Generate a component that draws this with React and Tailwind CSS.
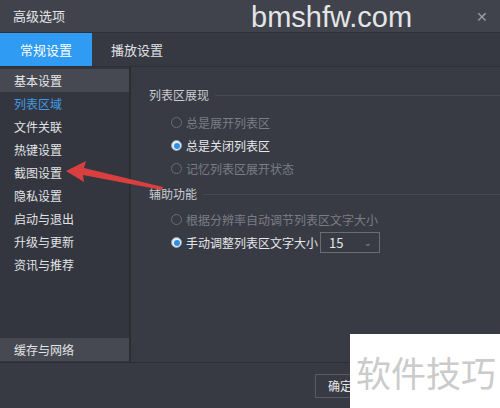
import React from "react";

const sideItems = [
  "基本设置",
  "列表区域",
  "文件关联",
  "热键设置",
  "截图设置",
  "隐私设置",
  "启动与退出",
  "升级与更新",
  "资讯与推荐",
];

function Radio({ checked, label, dim }) {
  return (
    <div className="flex items-center h-[23px] gap-[4px]">
      <span
        className={
          "w-[11px] h-[11px] rounded-full border flex items-center justify-center " +
          (checked ? "border-[#8aa0b8] bg-[#e8eef5]" : "border-[#6a6d74]")
        }
      >
        {checked && <span className="w-[6px] h-[6px] rounded-full bg-[#2d8fe6]" />}
      </span>
      <span className={dim ? "text-[#7a7d84]" : "text-[#e6e7ea]"}>{label}</span>
    </div>
  );
}

function Section({ title }) {
  return (
    <div className="flex items-center gap-[6px] h-[20px]">
      <span className="text-[#c9cbd0]">{title}</span>
      <div className="flex-1 h-px bg-[#474a52]" />
    </div>
  );
}

export default function App() {
  return (
    <div
      className="relative w-[500px] h-[408px] overflow-hidden bg-[#383b44] text-[12px] flex flex-col"
      style={{ fontFamily: '"Noto Sans CJK SC", "Noto Sans", sans-serif' }}
    >
      {/* title bar */}
      <div className="h-[33px] flex items-center justify-between pl-[13px] pr-[12px] bg-[#40434b] border-b border-[#2f3138]">
        <span className="text-[13px] text-[#e4e5e8]">高级选项</span>
        <span className="text-[#9a9ca2] text-[14px] leading-none font-light">✕</span>
      </div>

      {/* tabs */}
      <div className="h-[34px] flex bg-[#363942] border-b border-[#2d3036]">
        <div className="w-[92px] bg-[#2f9bf2] flex items-center justify-center text-[13px] text-white">
          常规设置
        </div>
        <div className="w-[90px] flex items-center justify-center text-[13px] text-[#e0e1e4]">
          播放设置
        </div>
      </div>

      {/* body */}
      <div className="h-[295px] flex">
        <div className="w-[131px] bg-[#33363e] border-r-2 border-[#2b2e34] flex flex-col justify-between pt-[2px] pb-[1px]">
          <div className="flex flex-col">
            {sideItems.map((s, i) => (
              <div
                key={s}
                className={
                  "h-[23px] flex items-center pl-[14px] " +
                  (i === 0 ? "bg-[#464951] text-[#e6e7ea]" : i === 1 ? "text-[#3f9be6]" : "text-[#e2e3e6]")
                }
              >
                {s}
              </div>
            ))}
          </div>
          <div className="h-[23px] flex items-center pl-[14px] bg-[#464951] text-[#e2e3e6]">
            缓存与网络
          </div>
        </div>

        <div className="flex-1 pl-[18px] pt-[18px] flex flex-col">
          <Section title="列表区展现" />
          <div className="pl-[22px] pt-[6px] flex flex-col">
            <Radio label="总是展开列表区" dim />
            <Radio label="总是关闭列表区" checked />
            <Radio label="记忆列表区展开状态" dim />
          </div>
          <div className="pt-[4px]">
            <Section title="辅助功能" />
          </div>
          <div className="pl-[22px] pt-[4px] flex flex-col">
            <Radio label="根据分辨率自动调节列表区文字大小" dim />
            <div className="flex items-center gap-[2px]">
              <Radio label="手动调整列表区文字大小" checked />
              <div className="w-[60px] h-[21px] border border-[#6a6d74] flex items-center justify-between pl-[8px] pr-[7px] text-[13px] text-[#e6e7ea]">
                <span>15</span>
                <span className="text-[#8d9096] text-[9px]">⌄</span>
              </div>
            </div>
          </div>
        </div>
      </div>

      {/* footer */}
      <div className="flex-1 border-t border-[#2b2e34] bg-[#373a43] flex items-center pl-[315px]">
        <div className="w-[50px] h-[24px] border border-[#585b62] flex items-center justify-center text-[#e6e7ea]">
          确定
        </div>
      </div>

      {/* watermark */}
      <div
        className="absolute left-[251px] top-[0px] text-[29px] text-[#e4e5e7] leading-[34px]"
        style={{ fontFamily: '"Liberation Sans", Arial, sans-serif' }}
      >
        bmshfw.com
      </div>

      {/* red arrow */}
      <svg className="absolute left-0 top-0" width="500" height="408">
        <polygon points="66,171 86,161 84,168 163,187 162,190 83,175 84,182" fill="#e8403f" opacity="0.92" />
      </svg>

      {/* white badge */}
      <div className="absolute left-[350px] top-[334px] w-[150px] h-[74px] bg-white flex items-center pl-[6px]">
        <span className="text-[35px] text-[#cbcbcb] whitespace-nowrap leading-none">软件技巧</span>
      </div>
    </div>
  );
}
